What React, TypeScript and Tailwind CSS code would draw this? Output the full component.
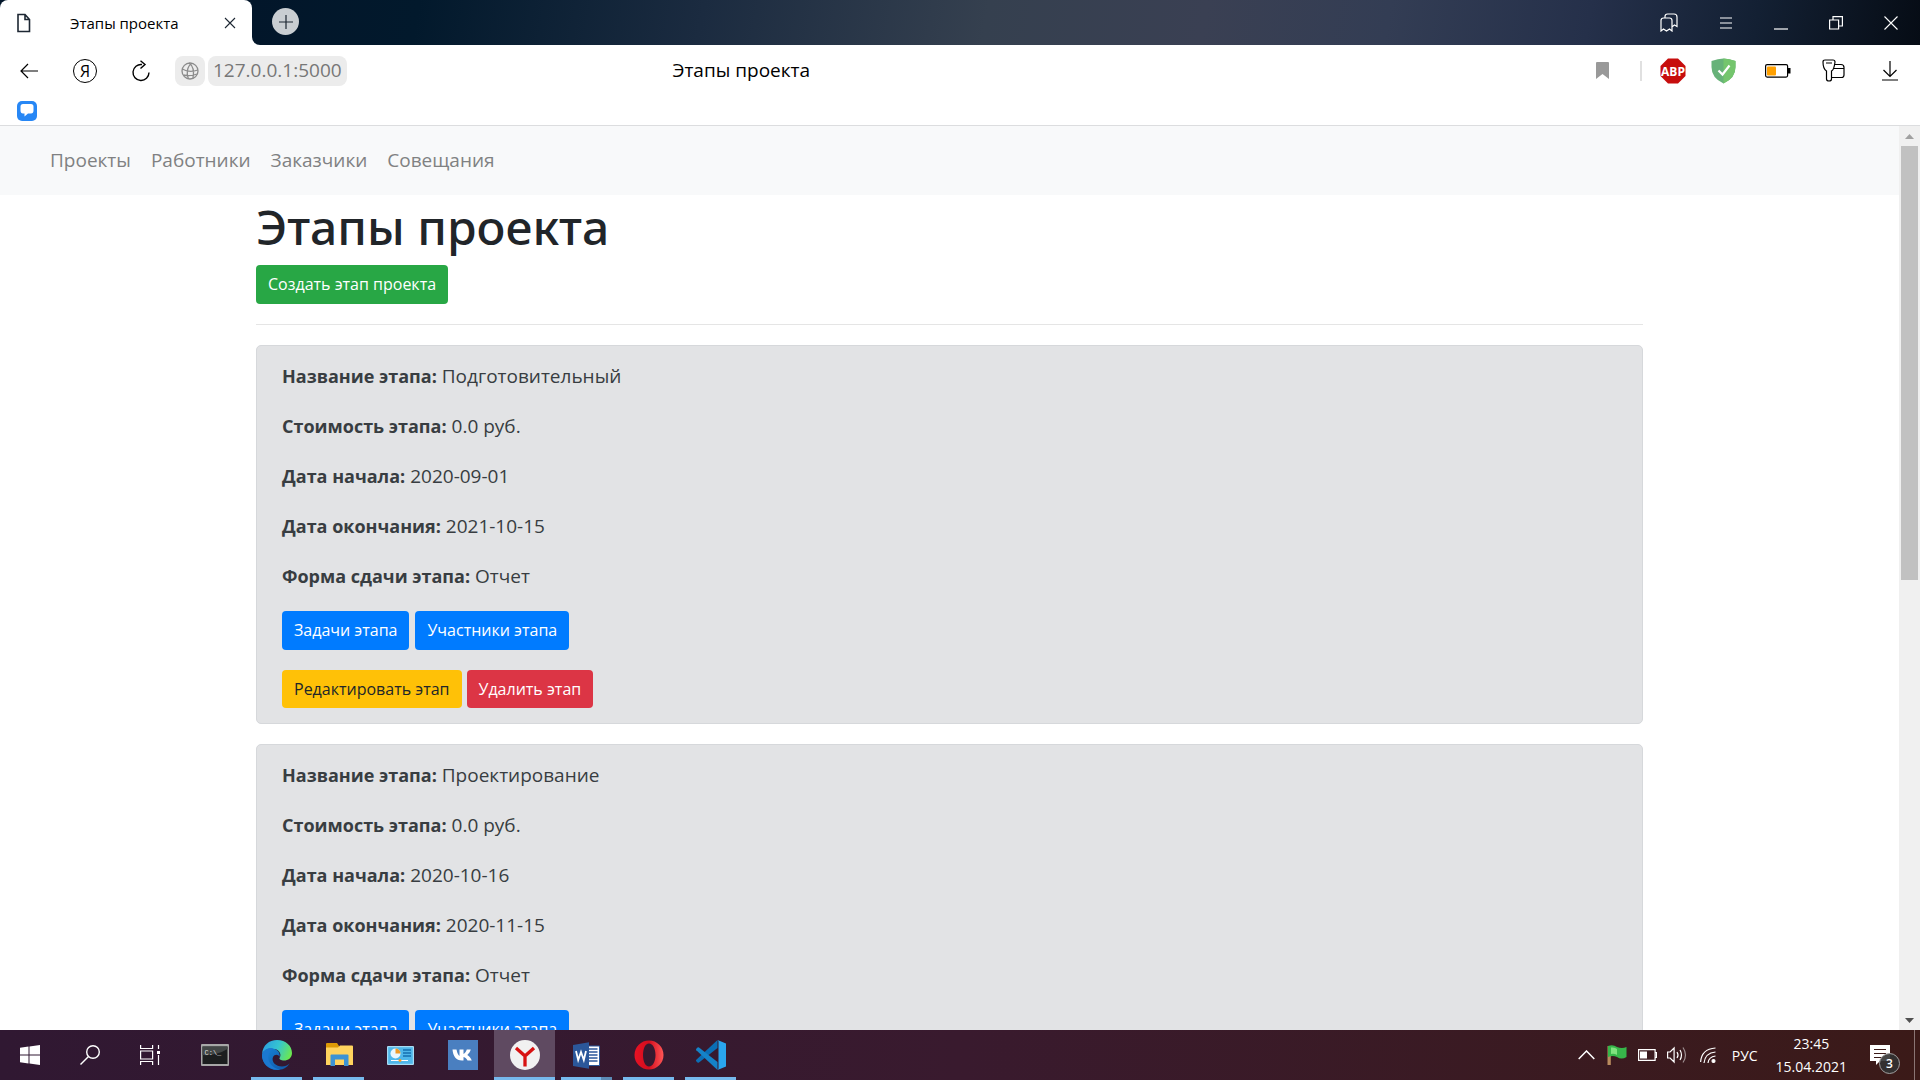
import React from "react";

const ui = "font-['Open_Sans','Noto_Sans',sans-serif]";

type Stage = { name: string; cost: string; start: string; end: string; form: string };

const stages: Stage[] = [
  { name: "Подготовительный", cost: "0.0 руб.", start: "2020-09-01", end: "2021-10-15", form: "Отчет" },
  { name: "Проектирование", cost: "0.0 руб.", start: "2020-10-16", end: "2020-11-15", form: "Отчет" },
];

const line = { fill: "none", stroke: "currentColor" } as const;

function TabStrip() {
  return (
    <header className="flex h-[45px] shrink-0 items-stretch bg-[#02162a] text-white">
      <div className="flex w-[252px] items-center rounded-t-lg bg-white pr-4 pl-4 text-[#1d2733]">
        <svg width="16" height="20" viewBox="0 0 16 20" {...line} strokeWidth="1.6" aria-hidden="true">
          <path d="M2 1.5h7l4.5 5v12H2zM9 1.5v5h4.5" />
        </svg>
        <span className="ml-[38px] flex-1 pt-[2px] text-[15px] text-black">Этапы проекта</span>
        <button aria-label="Закрыть вкладку">
          <svg width="12" height="12" viewBox="0 0 12 12" {...line} strokeWidth="1.1"><path d="M1 1l10 10M11 1L1 11" /></svg>
        </button>
      </div>
      <div className="flex flex-1 items-center bg-white">
        <div className="flex h-full flex-1 items-center rounded-bl-lg bg-[linear-gradient(100deg,#02162a_0%,#02192c_10%,#1b2b40_27%,#35404f_44%,#3a4053_57%,#333d54_68%,#25304a_80%,#132033_90%,#060c15_100%)] pr-[22px] pl-5">
          <button aria-label="Новая вкладка" className="mb-[2px] flex size-[27px] items-center justify-center rounded-full bg-[#c9ced2] text-[#1d2733]">
            <svg width="14" height="14" viewBox="0 0 14 14" {...line} strokeWidth="1.2"><path d="M7 0v14M0 7h14" /></svg>
          </button>
          <div className="ml-auto flex items-center gap-[41px]">
            <button aria-label="Коллекции">
              <svg width="18" height="19" viewBox="0 0 18 19" {...line} strokeWidth="1.2">
                <path d="M1 18V7.500q0-2.500 2.500-2.500h6q2.500 0 2.500 2.500V18l-2.500-2-3 2-3-2zM5 4.500V3.500Q5 1 7.500 1H14q3 0 3 3v9.500l-2.500-1.500-2 1.500" />
              </svg>
            </button>
            <button aria-label="Меню"><svg width="14" height="12" viewBox="0 0 14 12" {...line} strokeWidth="1.2"><path d="M1 1h12M1 6h12M1 11h12" /></svg></button>
            <button aria-label="Свернуть" className="pt-3"><svg width="14" height="14" viewBox="0 0 14 14" {...line} strokeWidth="1.2"><path d="M0 7h14" /></svg></button>
            <button aria-label="Восстановить"><svg width="14" height="14" viewBox="0 0 14 14" {...line} strokeWidth="1.2"><path d="M.6 4h9v9h-9zM4 4V.6h9.400V10H10" /></svg></button>
            <button aria-label="Закрыть"><svg width="14" height="14" viewBox="0 0 14 14" {...line} strokeWidth="1.1"><path d="M.5.5l13 13M13.500.5l-13 13" /></svg></button>
          </div>
        </div>
      </div>
    </header>
  );
}

function Toolbar() {
  return (
    <div className="h-[81px] shrink-0 border-b border-[#dcdddf] bg-white text-black">
      <div className="flex h-[51px] items-center pr-[22px] pl-5">
        <div className="flex flex-1 items-center">
          <button aria-label="Назад"><svg width="18" height="16" viewBox="0 0 18 16" {...line} strokeWidth="1.2"><path d="M18 8H1M8 1L1 8l7 7" /></svg></button>
          <button aria-label="Яндекс" className="ml-[35px] flex size-6 items-center justify-center rounded-full border border-black text-base leading-none">Я</button>
          <button aria-label="Обновить" className="ml-[35px]">
            <svg width="18" height="22" viewBox="0 0 18 22" {...line} strokeWidth="1.4"><path d="M10 4.500A8 8 0 1 0 17 12.500M8.500.8L13 4.500 8.500 8.500" /></svg>
          </button>
          <button aria-label="О сайте" className="ml-[25px] flex size-[30px] items-center justify-center rounded-lg bg-[#ececec] text-[#8b8b8b]">
            <svg width="18" height="18" viewBox="0 0 18 18" {...line} strokeWidth="1.300"><circle cx="9" cy="9" r="8" /><path d="M11 1.200C6 4 5 12 7.500 17M8 1q6 4 4 15M1.200 7q7 4 15.600 1M2.500 13q7 1.500 13.500-1" /></svg>
          </button>
          <button className="ml-[3px] h-[30px] rounded-lg bg-[#ececec] px-[5px] text-[19px] leading-none text-[#777]">127.0.0.1:5000</button>
        </div>
        <div className="w-[136px] text-center text-[19px] whitespace-nowrap">Этапы проекта</div>
        <div className="flex flex-[1.67] items-center justify-end">
          <button aria-label="В закладки"><svg width="13" height="17" viewBox="0 0 13 17" fill="#999"><path d="M0 1q0-1 1-1h11q1 0 1 1v16l-6.500-5L0 17z" /></svg></button>
          <span className="ml-[31px] h-5 w-0.5 bg-[#e0e0e0]" />
          <button aria-label="Adblock Plus" className="ml-[18px]">
            <svg width="26" height="26" viewBox="0 0 26 26"><path d="M8 .5h10L25.500 8v10L18 25.500H8L.5 18V8z" fill="#c70d0d" /><text x="13" y="17.500" textAnchor="middle" fontFamily="Open Sans" fontWeight="700" fontSize="12" fill="#fff">ABP</text></svg>
          </button>
          <button aria-label="AdGuard" className="ml-[25px]">
            <svg width="25" height="26" viewBox="0 0 25 26"><path d="M12.500.5Q18 .5 24.500 3v6q0 11-12 16.500Q.5 20 .5 9V3Q7 .5 12.500.5z" fill="#67b279" /><path d="M12.500.5Q18 .5 24.500 3v6q0 11-12 16.500z" fill="#74c56d" /><path d="M7.500 12.500l4 4 7-9" fill="none" stroke="#fff" strokeWidth="2.200" /></svg>
          </button>
          <button aria-label="Батарея" className="ml-[29px]">
            <svg width="26" height="14" viewBox="0 0 26 14"><rect x=".6" y=".6" width="22" height="12.500" rx="1.500" fill="none" stroke="#000" strokeWidth="1.200" /><path d="M23 4h2.500v5.500H23z" /><rect x="2" y="2.500" width="9" height="9" rx="1" fill="#ffa000" /></svg>
          </button>
          <button aria-label="Пароли" className="ml-[31px]">
            <svg width="23" height="23" viewBox="0 0 23 23" {...line} strokeWidth="1.200"><path d="M3 1h8q2 0 2 2-1 8-3.500 9v8q0 2-2.500 2t-2.500-2v-8Q1 10 1 3q0-2 2-2zM4 4h6M12.500 5.500h6.500q3 0 3 3V16q0 2.500-2.500 2.500H10M12 9.500h10" /></svg>
          </button>
          <button aria-label="Загрузки" className="ml-[37px]">
            <svg width="16" height="20" viewBox="0 0 16 20" {...line} strokeWidth="1.200"><path d="M8 0v15M1.500 9L8 15.500 14.500 9M0 19h16" /></svg>
          </button>
        </div>
      </div>
      <div className="flex h-[29px] items-center pl-[17px]">
        <button aria-label="Закладка: сообщения" className="flex size-5 items-center justify-center rounded-[5px] bg-[#2787f5]">
          <svg width="14" height="13" viewBox="0 0 14 13" fill="#fff"><path d="M3 0h8q2.500 0 2.500 2.500v4Q13.500 9.500 11 9.500H8L4.500 12.500V9.500H3Q.5 9.500.5 6.500v-4Q.5 0 3 0z" /></svg>
        </button>
      </div>
    </div>
  );
}

function Field({ label, value }: { label: string; value: string }) {
  return (
    <p className="mb-5 text-[19px] leading-[30px]">
      <strong className="text-lg leading-[30px] font-bold">{label}:</strong> {value}
    </p>
  );
}

function StageCard({ stage }: { stage: Stage }) {
  return (
    <article className="mb-5 rounded-[5px] border border-[#d6d8db] bg-[#e2e3e5] px-[25px] py-[15px] text-[#383d41]">
      <Field label="Название этапа" value={stage.name} />
      <Field label="Стоимость этапа" value={stage.cost} />
      <Field label="Дата начала" value={stage.start} />
      <Field label="Дата окончания" value={stage.end} />
      <Field label="Форма сдачи этапа" value={stage.form} />
      <div className="flex gap-[6px] text-base leading-[39px] text-white">
        <button className="rounded bg-[#007bff] px-3">Задачи этапа</button>
        <button className="rounded bg-[#007bff] px-3">Участники этапа</button>
      </div>
      <div className="mt-5 flex gap-[5px] text-base leading-[38px]">
        <button className="rounded bg-[#ffc107] px-3 text-[#212529]">Редактировать этап</button>
        <button className="rounded bg-[#dc3545] px-3 text-white">Удалить этап</button>
      </div>
    </article>
  );
}

function Page() {
  return (
    <div className="flex min-h-0 flex-1 bg-white">
      <main className="min-w-0 flex-1 overflow-hidden">
        <nav className="flex h-[69px] items-center gap-5 bg-[#f8f9fa] pl-[50px] text-[19px] text-[#808182]">
          <a href="#projects">Проекты</a>
          <a href="#workers">Работники</a>
          <a href="#customers">Заказчики</a>
          <a href="#meetings">Совещания</a>
        </nav>
        <div className="mx-auto max-w-[1387px]">
          <h1 className="pt-[2px] mb-2 font-['Noto_Sans','Open_Sans',sans-serif] text-5xl leading-[60px] font-medium text-[#212529]">Этапы проекта</h1>
          <button className="block rounded bg-[#28a745] px-3 text-base leading-[39px] text-white">Создать этап проекта</button>
          <hr className="my-5 border-[#e5e5e5]" />
          {stages.map((s) => <StageCard key={s.name} stage={s} />)}
        </div>
      </main>
      <div className="flex w-[21px] flex-col items-center bg-[#f0f0f0]" aria-hidden="true">
        <svg className="shrink-0" width="21" height="20" viewBox="0 0 21 20"><path d="M6 13l4.500-5 4.500 5z" fill="#a0a0a0" /></svg>
        <div className="h-[48%] w-[17px] bg-[#c1c1c1]" />
        <svg className="mt-auto shrink-0" width="21" height="20" viewBox="0 0 21 20"><path d="M6 8l4.500 5L15 8z" fill="#505050" /></svg>
      </div>
    </div>
  );
}

function AppButton({ label, state, children }: { label: string; state?: "open" | "active" | "stack"; children: React.ReactNode }) {
  return (
    <button aria-label={label} className={state === "active" ? "flex h-full w-[61px] flex-col items-center bg-[#5f4a61]" : "flex h-full w-[51px] flex-col items-center"}>
      <span className="flex flex-1 items-center pt-[3px]">{children}</span>
      {state === "stack" ? (
        <span className="flex h-[3px] w-full"><span className="flex-1 bg-[#76b9ed]" /><span className="w-[11px] bg-[#5c8bb5]" /></span>
      ) : (
        <span className={state ? "h-[3px] w-full bg-[#76b9ed]" : "h-[3px] w-full"} />
      )}
    </button>
  );
}

function Taskbar() {
  return (
    <footer className="flex h-[50px] shrink-0 items-center bg-linear-to-r from-[#301832] via-[#391a2e] to-[#3b1a18] text-white">
      <button aria-label="Пуск" className="ml-5">
        <svg width="20" height="20" viewBox="0 0 20 20" fill="#fff"><path d="M0 2.800L8.500 1.600v8H0zM9.500 1.400L20 0v9.600H9.500zM0 10.500h8.500v8L0 17.300zM9.500 10.500H20V20L9.500 18.600z" /></svg>
      </button>
      <button aria-label="Поиск" className="ml-10">
        <svg width="20" height="20" viewBox="0 0 20 20" {...line} strokeWidth="1.400"><circle cx="13" cy="7" r="6.300" /><path d="M8.500 11.500L.5 19.500" /></svg>
      </button>
      <button aria-label="Представление задач" className="ml-10">
        <svg width="20" height="20" viewBox="0 0 20 20" {...line} strokeWidth="1.200"><path d="M.6 0v3.500h12V0M.6 6h12v8H.6zM.6 20v-3.500h12V20M18.500 0v4M18.500 10v10" /><path d="M17 6h3v3h-3z" fill="#fff" stroke="none" /></svg>
      </button>
      <div className="ml-[29px] flex h-full gap-[11px]">
        <AppButton label="Командная строка">
          <svg width="28" height="22" viewBox="0 0 28 22"><rect width="28" height="22" rx="1" fill="#a7a7a7" /><rect x="1.500" y="2.500" width="25" height="17.500" fill="#1c1e1f" /><path d="M1.500 11Q15 12 26.500 5v-2.500h-25z" fill="#424646" /><text x="3.500" y="10.500" fontFamily="Liberation Mono" fontSize="7" fill="#ddd">C:\_</text></svg>
        </AppButton>
        <AppButton label="Microsoft Edge" state="open">
          <svg width="30" height="30" viewBox="0 0 30 30">
            <defs>
              <linearGradient id="edgeTop" x1="0" y1=".3" x2="1" y2=".6"><stop offset="0" stopColor="#2b9fe0" /><stop offset=".5" stopColor="#35c5d0" /><stop offset="1" stopColor="#6ce84e" /></linearGradient>
              <linearGradient id="edgeLow" x1="0" y1="0" x2="1" y2="1"><stop offset="0" stopColor="#1684d8" /><stop offset="1" stopColor="#1056a5" /></linearGradient>
            </defs>
            <path d="M0 14C1 5 7 0 15 0c9 0 15 6 15 13 0 5-4 7.500-8 7.500-3 0-5-1.200-4.500-2.500 2-2.500 1-8-5-9C7 8.500 2 10 0 14z" fill="url(#edgeTop)" />
            <path d="M0 15C1 10 6 7.500 11 8.500c5 1 7.500 5 6.500 8.500-1-3-5-3-6.500 0-2 5 3 9.500 9 9.500 3 0 5.500-1 7.500-3-2.500 4.500-7.500 6.500-12.500 6.500C6 30 0 23 0 15z" fill="url(#edgeLow)" />
            <path d="M11 8.500C6 12 5 18 8 23c2 3.500 6 6 10 6.700C7 31 0 23 0 15c1-5 6-7.500 11-6.500z" fill="#1b78d0" />
          </svg>
        </AppButton>
        <AppButton label="Проводник" state="open">
          <svg width="28" height="24" viewBox="0 0 28 24"><path d="M1 1q0-1 1-1h10l2 3v3H1z" fill="#dd9a06" /><path d="M1 4.500h12l2-2h12q1 0 1 1V22H1z" fill="#ffd35e" /><path d="M5.500 12.500q0-1 1-1h16q1 0 1 1V23H19v-6.500H10V23H5.500z" fill="#3c93d4" /></svg>
        </AppButton>
        <AppButton label="Панель управления">
          <svg width="27" height="19" viewBox="0 0 27 19"><rect width="27" height="19" rx="1" fill="#a7dcf4" /><rect x="1.200" y="1.200" width="24.600" height="16.600" fill="#4fb7ea" /><circle cx="8.500" cy="7.500" r="5" fill="#eaf6fd" /><path d="M8.500 7.500v-5a5 5 0 0 1 5 5z" fill="#ef9a27" /><path d="M16 4h8M16 7h8M16 10h8" stroke="#1670b0" strokeWidth="1.500" /><path d="M4 14.500h17" stroke="#fff" /><circle cx="13" cy="14.500" r="1.400" fill="#f29b25" /></svg>
        </AppButton>
        <AppButton label="ВКонтакте">
          <svg width="30" height="30" viewBox="0 0 30 30"><path d="M0 0h30v30H0z" fill="#4a7fc0" /><path d="M4.500 9.500h4c.8 4 2 6 3 6.500V9.500h4v4.500c1.500-.5 2.600-2.500 3.300-4.500h4c-.8 2.500-2 4-3.500 5.500 2 1.300 3.400 3 4.500 5.500h-4.300c-1-2-2-3-4-3.500v3.500h-1.500C8 20.500 5 16 4.500 9.500z" fill="#fff" /></svg>
        </AppButton>
      </div>
      <div className="ml-[6px] flex h-full gap-[6px]">
        <AppButton label="Яндекс Браузер" state="active">
          <svg width="30" height="30" viewBox="0 0 30 30"><circle cx="15" cy="15" r="15" fill="#f1f1f1" /><path d="M6 8l9 8 9-8M15 15.500V26.500" fill="none" stroke="#d81212" strokeWidth="3.300" /></svg>
        </AppButton>
        <div className="flex gap-[11px]">
          <AppButton label="Microsoft Word" state="stack">
            <svg width="27" height="27" viewBox="0 0 27 27"><path d="M14 4h12.500v19.500H14z" fill="#fff" stroke="#2b579a" /><path d="M16 7h8.500M16 10h8.500M16 13h8.500M16 16h8.500M16 19h8.500" stroke="#2b579a" strokeWidth="1.300" /><path d="M0 3L16 .3v26.400L0 24z" fill="#2b579a" /><path d="M3 9l2.200 9L8 10l2.800 8L13 9" fill="none" stroke="#fff" strokeWidth="1.800" /></svg>
          </AppButton>
          <AppButton label="Opera" state="open">
            <svg width="30" height="30" viewBox="0 0 30 30"><defs><linearGradient id="opera" x1="0" x2="1"><stop offset="0" stopColor="#e81224" /><stop offset=".5" stopColor="#d30d1d" /><stop offset="1" stopColor="#ff5656" /></linearGradient></defs><path fillRule="evenodd" d="M15 .5A14.500 14.500 0 1 1 15 29.500 14.500 14.500 0 1 1 15 .5zM15 3.500c-4 0-6 5.500-6 11.500s2 11.500 6 11.500 6.500-5.500 6.500-11.500S19 3.500 15 3.500z" fill="url(#opera)" /></svg>
          </AppButton>
          <AppButton label="Visual Studio Code" state="open">
            <svg width="30" height="30" viewBox="0 0 30 30"><path d="M21.500 0v8L3 22.500q-.8.500-1.500 0L.3 21.300q-.6-.8 0-1.500z" fill="#0b6eb5" /><path d="M21.500 30v-8L3 7.500q-.8-.5-1.500 0L.3 8.700q-.6.800 0 1.500z" fill="#1583c8" /><path d="M21.500 0L30 3.500v23L21.500 30q1-.5 1-2V2q0-1.500-1-2z" fill="#2aa5ee" /></svg>
          </AppButton>
        </div>
      </div>
      <div className="ml-auto flex h-full items-center">
        <button aria-label="Скрытые значки"><svg width="17" height="10" viewBox="0 0 17 10" {...line} strokeWidth="1.500"><path d="M.7 9l7.800-8 7.800 8" /></svg></button>
        <button aria-label="Состояние" className="ml-3"><svg width="20" height="20" viewBox="0 0 20 20"><path d="M.5 1h3.300v19H.5z" fill="#b98b5e" /><path d="M1 1q5-2 9 1 5 2 9.500 0v10q-5 3-9.500 0-4-2-9 0z" fill="#37b64a" /><path d="M4 2.500q4-.5 6 1.500v6q-3-2-6-1z" fill="#7fe27e" /></svg></button>
        <button aria-label="Батарея" className="ml-[11px]"><svg width="19" height="12" viewBox="0 0 19 12"><path d="M.6.6h16.500v10.800H.6zM17.500 3.500h1v5h-1" fill="none" stroke="#fff" strokeWidth="1.200" /><path d="M2 2.500h7v7H2z" fill="#fff" /></svg></button>
        <button aria-label="Громкость" className="ml-[10px]"><svg width="20" height="18" viewBox="0 0 20 18" {...line} strokeWidth="1.200"><path d="M.6 6h2.500l4-4v14l-4-4H.6zM10 6q2 3 0 6M13 4q3 5 0 10" /><path d="M16 1.500q5 7.500 0 15" opacity=".5" /></svg></button>
        <button aria-label="Сеть" className="ml-[13px]"><svg width="16" height="17" viewBox="0 0 16 17" {...line} strokeWidth="1.200"><path d="M.6 15Q1.500 2 15.500 1M4 16Q5 6 15.500 5M8 16q.5-6 7.500-7" /><circle cx="13.500" cy="14" r="1.500" fill="#fff" /></svg></button>
        <button className="ml-4 pt-px text-sm">РУС</button>
        <div className="ml-[18px] text-center text-sm leading-[23px]"><div>23:45</div><div>15.04.2021</div></div>
        <button aria-label="Уведомления: 3" className="relative ml-[23px] h-[30px] w-[30px]">
          <svg width="20" height="20" viewBox="0 0 20 20"><path d="M0 0h20v16H10l-4 4v-4H0z" fill="#fff" /><path d="M4 4.500h12M4 8.500h12M4 12.500h8" stroke="#3b1a18" strokeWidth="1.200" /></svg>
          <span className="absolute right-0 -bottom-1 flex size-[21px] items-center justify-center rounded-full border border-[#a0a0a0] bg-[#333]/90 text-xs font-semibold">3</span>
        </button>
        <span className="ml-[14px] h-full w-px bg-[#8a7574]" />
        <span className="w-[5px]" />
      </div>
    </footer>
  );
}

export default function App() {
  return (
    <div className={`flex h-screen flex-col overflow-hidden ${ui}`}>
      <TabStrip />
      <Toolbar />
      <Page />
      <Taskbar />
    </div>
  );
}
